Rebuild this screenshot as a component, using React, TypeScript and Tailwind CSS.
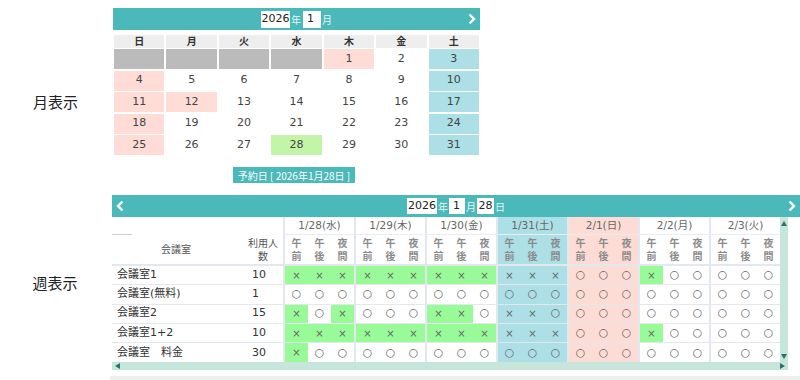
import React from "react";

const dows = ["日", "月", "火", "水", "木", "金", "土"];

const monthBg: Record<string, string> = {
  g: "bg-[#bbbbbb]",
  p: "bg-[#ffdcd6]",
  w: "bg-white",
  b: "bg-[#acdfe6]",
  n: "bg-[#c3f5a9]",
};

// [day, colour key]
const monthRows: [string, string][][] = [
  [["", "g"], ["", "g"], ["", "g"], ["", "g"], ["1", "p"], ["2", "w"], ["3", "b"]],
  [["4", "p"], ["5", "w"], ["6", "w"], ["7", "w"], ["8", "w"], ["9", "w"], ["10", "b"]],
  [["11", "p"], ["12", "p"], ["13", "w"], ["14", "w"], ["15", "w"], ["16", "w"], ["17", "b"]],
  [["18", "p"], ["19", "w"], ["20", "w"], ["21", "w"], ["22", "w"], ["23", "w"], ["24", "b"]],
  [["25", "p"], ["26", "w"], ["27", "w"], ["28", "n"], ["29", "w"], ["30", "w"], ["31", "b"]],
];

const days = [
  { label: "1/28(水)", bg: "" },
  { label: "1/29(木)", bg: "" },
  { label: "1/30(金)", bg: "" },
  { label: "1/31(土)", bg: "bg-[#acdfe6]" },
  { label: "2/1(日)", bg: "bg-[#fddcd5]" },
  { label: "2/2(月)", bg: "" },
  { label: "2/3(火)", bg: "" },
];

const slots = [
  ["午", "前"],
  ["午", "後"],
  ["夜", "間"],
];

const rooms = [
  { name: "会議室1", n: "10", s: "xxx xxx xxx xxx ooo xoo ooo" },
  { name: "会議室(無料)", n: "1", s: "ooo ooo ooo ooo ooo ooo ooo" },
  { name: "会議室2", n: "15", s: "xox ooo xxo xxo ooo ooo ooo" },
  { name: "会議室1+2", n: "10", s: "xxx xxx xxx xxx ooo xoo ooo" },
  { name: "会議室　料金", n: "30", s: "xoo ooo ooo ooo ooo ooo ooo" },
];

const Chevron = ({ dir }: { dir: "l" | "r" }) => (
  <svg width="8" height="12" viewBox="0 0 8 12" className="shrink-0">
    <polyline
      points={dir === "r" ? "1.5,1.5 6,6 1.5,10.5" : "6.5,1.5 2,6 6.5,10.5"}
      fill="none"
      stroke="white"
      strokeWidth="2.4"
    />
  </svg>
);

const Tri = ({ dir }: { dir: "u" | "d" | "l" | "r" }) => {
  const pts = {
    u: "0,6 3,1 6,6",
    d: "0,1 6,1 3,6",
    l: "6,0 6,6 1,3",
    r: "0,0 0,6 5,3",
  }[dir];
  return (
    <svg width="6" height="7" viewBox="0 0 6 7">
      <polygon points={pts} fill="#2f6f6a" />
    </svg>
  );
};

const MonthView = () => (
  <div className="w-[367px]">
    <div className="h-[22px] bg-[#4bb9ba] flex items-center justify-between px-[4px]">
      <div className="w-[8px]" />
      <div className="flex items-center text-[10px] text-[#e4f6f6] font-['Noto_Sans_CJK_JP',sans-serif]">
        <div className="h-[17px] w-[29px] bg-white text-[#222] text-[11px] flex items-center justify-center font-['DejaVu_Sans',sans-serif]">2026</div>
        <span className="ml-[1px]">年</span>
        <div className="h-[17px] w-[18px] bg-white text-[#222] text-[11px] flex items-center pl-[4px] ml-[2px] font-['DejaVu_Sans',sans-serif]">1</div>
        <span className="ml-[1px]">月</span>
      </div>
      <Chevron dir="r" />
    </div>
    <div className="mt-[5px] grid grid-cols-7 gap-x-[2px] px-[1px]">
      {dows.map((d) => (
        <div key={d} className="h-[13px] bg-[#eeeeee] flex items-center justify-center text-[10px] font-bold text-[#333]">
          {d}
        </div>
      ))}
    </div>
    <div className="mt-[1px] grid grid-cols-7 gap-x-[2px] gap-y-[1.5px] px-[1px]">
      {monthRows.flat().map(([d, c], i) => (
        <div key={i} className={`h-[20px] flex items-center justify-center text-[11px] text-[#444] ${monthBg[c]}`}>
          {d}
        </div>
      ))}
    </div>
    <div className="mt-[12px] flex justify-center pr-[5px]">
      <div className="h-[16px] px-[5px] bg-[#4bb9ba] text-white text-[10px] flex items-center font-['Noto_Sans_CJK_JP',sans-serif]">
        予約日 [ 2026年1月28日 ]
      </div>
    </div>
  </div>
);

const WeekView = () => (
  <div className="w-[688px]">
    <div className="h-[22px] bg-[#4bb9ba] flex items-center justify-between px-[4px]">
      <Chevron dir="l" />
      <div className="flex items-center text-[10px] text-[#e4f6f6] font-['Noto_Sans_CJK_JP',sans-serif]">
        <div className="h-[16px] w-[30px] bg-white text-[#222] text-[11px] flex items-center justify-center font-['DejaVu_Sans',sans-serif]">2026</div>
        <span className="ml-[1px]">年</span>
        <div className="h-[16px] w-[16px] bg-white text-[#222] text-[11px] flex items-center pl-[4px] ml-[1px] font-['DejaVu_Sans',sans-serif]">1</div>
        <span className="ml-[1px]">月</span>
        <div className="h-[16px] w-[17px] bg-white text-[#222] text-[11px] flex items-center justify-center ml-[1px] font-['DejaVu_Sans',sans-serif]">28</div>
        <span className="ml-[1px]">日</span>
      </div>
      <Chevron dir="r" />
    </div>
    <div className="flex">
      <div className="w-[668px]">
        {/* date header */}
        <div className="flex h-[18px]">
          <div className="w-[171px] relative bg-white">
            <div className="absolute left-0 bottom-0 w-[20px] h-[1px] bg-[#c8ced6]" />
          </div>
          {days.map((d) => (
            <div
              key={d.label}
              className={`w-[71px] border-l-2 border-[#e3e8ef] border-b border-b-[#e9edf2] flex items-center justify-center text-[10.5px] text-[#666] ${d.bg || "bg-white"}`}
            >
              {d.label}
            </div>
          ))}
        </div>
        {/* slot header */}
        <div className="flex h-[31px] border-b-2 border-[#e3e8ef]">
          <div className="w-[128px] flex items-center justify-center text-[10px] text-[#555]">会議室</div>
          <div className="w-[43px] flex flex-col items-center justify-center text-[10px] leading-[13px] text-[#555] pl-[3px]">
            <span>利用人</span>
            <span>数</span>
          </div>
          {days.map((d) => (
            <div key={d.label} className={`w-[71px] flex border-l-2 border-[#e3e8ef] ${d.bg || "bg-white"}`}>
              {slots.map((s, i) => (
                <div key={i} className="flex-1 flex flex-col items-center justify-center text-[10px] leading-[13px] font-bold text-[#8a8a8a]">
                  <span>{s[0]}</span>
                  <span>{s[1]}</span>
                </div>
              ))}
            </div>
          ))}
        </div>
        {rooms.map((r) => {
          const groups = r.s.split(" ");
          return (
            <div key={r.name} className="flex h-[19.3px] border-b border-[#e3e8ef] last:border-b-0">
              <div className="w-[128px] flex items-center pl-[5px] text-[11px] text-[#333]">{r.name}</div>
              <div className="w-[43px] flex items-center pl-[12px] text-[11px] text-[#333]">{r.n}</div>
              {days.map((d, di) => (
                <div key={d.label} className="w-[71px] flex border-l-2 border-[#e3e8ef]">
                  {groups[di].split("").map((c, i) => (
                    <div
                      key={i}
                      className={`flex-1 flex items-center justify-center text-[#666] ${
                        d.bg || (c === "x" ? "bg-[#98fb98]" : "bg-white")
                      } ${c === "x" ? "text-[10px]" : "text-[11px]"}`}
                    >
                      {c === "x" ? "×" : "○"}
                    </div>
                  ))}
                </div>
              ))}
            </div>
          );
        })}
      </div>
      <div className="w-[8px] bg-[#c6e6dc] flex flex-col items-center justify-between pt-[3px] pb-[2px]">
        <Tri dir="u" />
        <Tri dir="d" />
      </div>
    </div>
    <div className="w-[676px] h-[8px] bg-[#c6e6dc] flex items-center justify-between px-[2px]">
      <Tri dir="l" />
      <Tri dir="r" />
    </div>
  </div>
);

export default function App() {
  return (
    <div className="w-[800px] h-[380px] bg-white overflow-hidden relative font-['DejaVu_Sans','Noto_Sans_CJK_JP',sans-serif]">
      <div className="flex pt-[8px]">
        <div className="w-[113px] flex items-center justify-center pt-[14px] pr-[2px] text-[15px] text-[#222] font-['Noto_Sans_CJK_JP',sans-serif]">
          月表示
        </div>
        <MonthView />
      </div>
      <div className="flex mt-[12px]">
        <div className="w-[112px] flex items-center justify-center pt-[2px] pr-[2px] text-[15px] text-[#222] font-['Noto_Sans_CJK_JP',sans-serif]">
          週表示
        </div>
        <WeekView />
      </div>
      <div className="ml-[110px] mt-[6px] h-[4px] bg-[#eeeeee]" />
    </div>
  );
}
